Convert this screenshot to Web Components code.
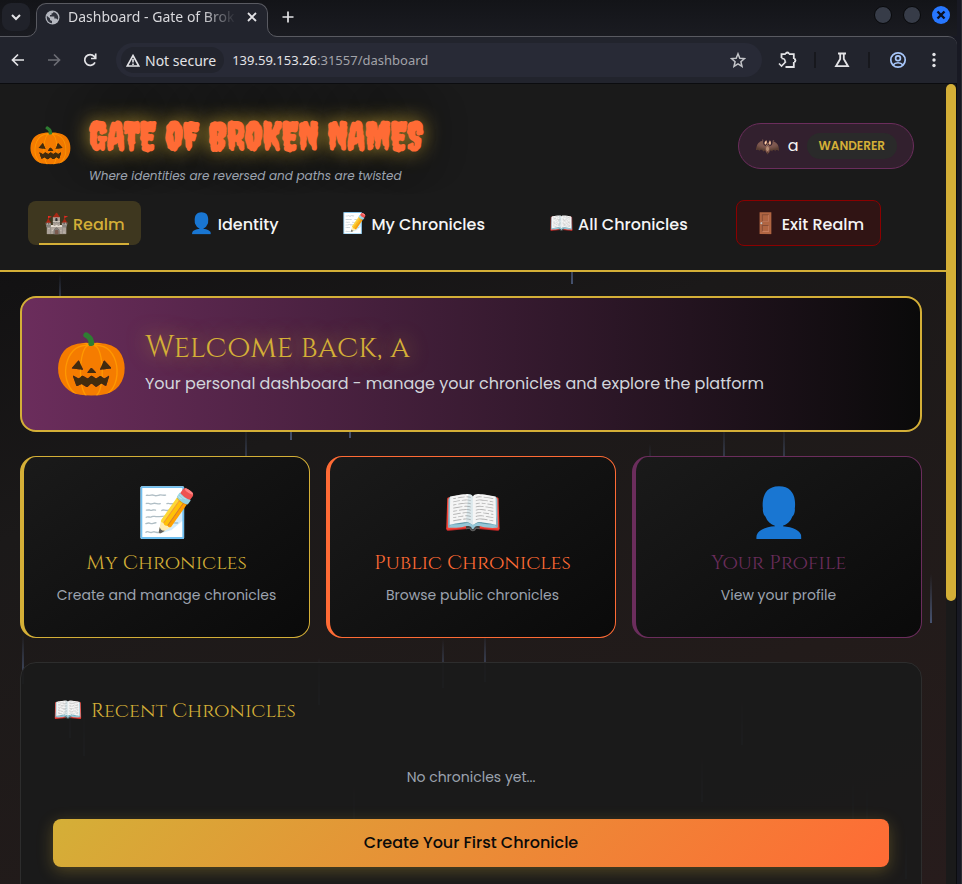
<!DOCTYPE html>
<html lang="en">
<head>
<meta charset="utf-8">
<title>Dashboard - Gate of Broken Names</title>
<style>
  :root {
    --gold: #d4af37;
    --orange: #ff6b35;
    --purple: #6b2d5c;
    --coal: #1a1a1a;
    --night: #0a0a0a;
    --muted: #9ca3af;
    --chrome: #22242d;
    --body-font: Poppins, Inter, "Noto Sans", sans-serif;
    --heading-font: Cinzel, "Liberation Serif", serif;
    --title-font: Creepster, "DejaVu Sans Condensed", sans-serif;
  }
  html, body {
    margin: 0;
    height: 100%;
    overflow: hidden;
    background: #181923;
    font-family: var(--body-font);
  }
</style>
</head>
<body>

<browser-window>
  <tab-strip slot="tabs" label="Dashboard - Gate of Brok"></tab-strip>
  <tool-bar slot="toolbar"></tool-bar>

  <rain-layer></rain-layer>
  <site-header>
    <user-pill slot="user" name="a" rank="Wanderer"></user-pill>
    <nav-link slot="nav" icon="🏰" active>Realm</nav-link>
    <nav-link slot="nav" icon="👤">Identity</nav-link>
    <nav-link slot="nav" icon="📝">My Chronicles</nav-link>
    <nav-link slot="nav" icon="📖">All Chronicles</nav-link>
    <nav-link slot="nav" icon="🚪" danger>Exit Realm</nav-link>
  </site-header>
  <dash-board>
    <welcome-banner icon="🎃">
      <span slot="title">Welcome back, a</span>
      Your personal dashboard - manage your chronicles and explore the platform
    </welcome-banner>
    <link-card slot="cards" icon="📝" heading="My Chronicles" style="--accent: var(--gold)">Create and manage chronicles</link-card>
    <link-card slot="cards" icon="📖" heading="Public Chronicles" style="--accent: var(--orange)">Browse public chronicles</link-card>
    <link-card slot="cards" icon="👤" heading="Your Profile" style="--accent: var(--purple)">View your profile</link-card>
    <recent-panel slot="recent" icon="📖" heading="Recent Chronicles" action="Create Your First Chronicle">No chronicles yet...</recent-panel>
  </dash-board>
</browser-window>

<script>
class BaseElement extends HTMLElement {
  constructor() {
    super();
    const template = document.createElement('template');
    template.innerHTML = this.render();
    this.attachShadow({mode: 'open'}).appendChild(template.content.cloneNode(true));
  }

  attr(name) {
    return this.getAttribute(name) || '';
  }
}

class BrowserWindow extends BaseElement {
  render() {
    return `
      <style>
        :host {
          box-sizing: border-box;
          display: flex;
          flex-direction: column;
          height: 100vh;
          padding-right: 4px;
          border-right: 1px solid #2c2d33;
        }
        .view {
          flex: 1;
          min-height: 0;
          display: flex;
          border-top: 1px solid #0b0c0f;
          border-right: 1px solid #0b0c0f;
        }
        .page {
          position: relative;
          flex: 1;
          min-width: 0;
          overflow: hidden;
          background: linear-gradient(160deg, #0d0d0d 0%, #131213 18%, #1b1919 40%, #221b1a 75%, #271c1c 100%);
        }
        .track {
          width: 10px;
          background: var(--coal);
        }
        .thumb {
          height: 517px;
          border-radius: 5px;
          background: var(--gold);
        }
      </style>
      <slot name="tabs"></slot>
      <slot name="toolbar"></slot>
      <div class="view">
        <div class="page"><slot></slot></div>
        <div class="track"><div class="thumb"></div></div>
      </div>
    `;
  }
}

class TabStrip extends BaseElement {
  render() {
    return `
      <style>
        :host {
          display: flex;
          height: 36px;
          padding-left: 2px;
          background: linear-gradient(#131418, #1a1b21);
          font-family: "Noto Sans", sans-serif;
        }
        button {
          display: grid;
          place-items: center;
          padding: 0;
          border: none;
          background: none;
          color: #e3e3e6;
        }
        .menu {
          width: 28px;
          height: 28px;
          margin: 3px 6px 0 0;
          border-radius: 9px;
          background: #20222a;
        }
        .tab {
          position: relative;
          box-sizing: border-box;
          display: flex;
          align-items: center;
          width: 232px;
          height: 34px;
          margin-top: 3px;
          padding: 0 7px 7px 8px;
          border: 1px solid #595a61;
          border-bottom: none;
          border-radius: 10px 10px 0 0;
          background: var(--chrome);
        }
        .label {
          flex: 1;
          margin: 0 8px;
          white-space: nowrap;
          font-size: 14px;
          line-height: 20px;
          color: #d8d8dc;
          -webkit-mask-image: linear-gradient(90deg, #000 80%, transparent);
          mask-image: linear-gradient(90deg, #000 80%, transparent);
        }
        .flare {
          position: absolute;
          bottom: 0;
          width: 10px;
          height: 10px;
        }
        .left { right: 100%; }
        .right { left: 100%; transform: scaleX(-1); }
        .new {
          width: 24px;
          height: 28px;
          margin: 3px 0 0 8px;
        }
        .buttons {
          display: flex;
          gap: 11px;
          margin: 6px 7px 0 auto;
        }
        .buttons button {
          box-sizing: border-box;
          width: 18px;
          height: 18px;
          border: 1px solid #08090b;
          border-radius: 50%;
          background: #373c48;
        }
        .buttons .close {
          border: none;
          background: #2777ff;
        }
      </style>
      <button class="menu" aria-label="Search tabs">
        <svg width="12" height="12" viewBox="0 0 12 12" fill="none" stroke="currentColor" stroke-width="2"><path d="M2 4l4 4 4-4"/></svg>
      </button>
      <div class="tab">
        <svg class="flare left" viewBox="0 0 10 10"><path d="M10 0v10H0V9.500A9.500 9.500 0 0 0 9.500 0z" fill="#22242d"/><path d="M0 9.500A9.500 9.500 0 0 0 9.500 0" fill="none" stroke="#595a61"/></svg>
        <svg class="flare right" viewBox="0 0 10 10"><path d="M10 0v10H0V9.500A9.500 9.500 0 0 0 9.500 0z" fill="#22242d"/><path d="M0 9.500A9.500 9.500 0 0 0 9.500 0" fill="none" stroke="#595a61"/></svg>
        <svg width="15" height="15" viewBox="0 0 15 15"><circle cx="7.500" cy="7.500" r="7" fill="#b4b7bf"/><path d="M1.800 5.800L5 8.600V10l2 1v2.200C4 13 1.800 10.500 1.800 7.500zM8.500 1.800c0 1.300-.5 1.700-2 1.700v1.400H5v1.500h4.300v2h2l1.500 1.400c1-2.600 0-6-3-7.400z" fill="#30333d"/></svg>
        <span class="label">${this.attr('label')}</span>
        <button aria-label="Close tab">
          <svg width="16" height="16" viewBox="0 0 16 16" stroke="currentColor" stroke-width="1.800"><path d="M4 4l8 8M12 4l-8 8"/></svg>
        </button>
      </div>
      <button class="new" aria-label="New tab">
        <svg width="12" height="12" viewBox="0 0 12 12" stroke="currentColor" stroke-width="1.700"><path d="M6 .5v11M.5 6h11"/></svg>
      </button>
      <div class="buttons">
        <button aria-label="Minimize"></button>
        <button aria-label="Maximize"></button>
        <button class="close" aria-label="Close">
          <svg width="10" height="10" viewBox="0 0 10 10" stroke="#0b1020" stroke-width="2.400"><path d="M1.500 1.500l7 7M8.500 1.500l-7 7"/></svg>
        </button>
      </div>
    `;
  }
}

class ToolBar extends BaseElement {
  render() {
    return `
      <style>
        :host {
          box-sizing: border-box;
          display: flex;
          align-items: center;
          height: 47px;
          padding-right: 5px;
          border-top: 1px solid #595a61;
          border-radius: 0 9px 0 0;
          background: var(--chrome);
          font-family: "Noto Sans", sans-serif;
          color: #e3e3e6;
        }
        button {
          display: grid;
          place-items: center;
          width: 36px;
          height: 36px;
          padding: 0;
          border: none;
          background: none;
          color: inherit;
        }
        button:disabled { color: #6c6d74; }
        svg {
          fill: none;
          stroke: currentColor;
          stroke-width: 2;
        }
        .address {
          flex: 1;
          display: flex;
          align-items: center;
          height: 34px;
          margin: 0 8px;
          padding: 0 6px 0 5px;
          border-radius: 17px;
          background: #282a36;
        }
        .chip {
          display: flex;
          align-items: center;
          gap: 5px;
          width: auto;
          height: 26px;
          padding: 0 8px 0 5px;
          border-radius: 13px;
          background: var(--chrome);
          font: 14px "Noto Sans", sans-serif;
        }
        .url {
          flex: 1;
          margin-left: 8px;
          font-size: 13px;
          line-height: 20px;
          color: #a2a3a9;
        }
        .url b {
          font-weight: 400;
          color: #e3e3e6;
        }
        .star { color: #c3c4c8; }
        i {
          width: 2px;
          height: 16px;
          margin: 0 8px;
          background: #17181d;
        }
        .profile {
          margin-left: 2px;
          color: #a8c7fa;
        }
      </style>
      <button aria-label="Back"><svg width="14" height="14" viewBox="0 0 14 14" style="stroke-width:1.700"><path d="M13 7H2M7 1.500L1.500 7 7 12.500"/></svg></button>
      <button aria-label="Forward" disabled><svg width="14" height="14" viewBox="0 0 14 14" style="stroke-width:1.700"><path d="M1 7h11M7 1.500L12.500 7 7 12.500"/></svg></button>
      <button aria-label="Reload"><svg width="14" height="14" viewBox="0 0 14 14" style="stroke-width:1.700"><path d="M12 9.300A5.400 5.400 0 1 1 11.200 3.400L12.500 5M12.700 .5v5H8"/></svg></button>
      <div class="address">
        <button class="chip">
          <svg width="14" height="13" viewBox="0 0 14 13" style="stroke-width:1.600"><path d="M7 1.500L12.800 12H1.200zM7 5v3.500M7 9.500V11"/></svg>
          Not secure
        </button>
        <span class="url"><b>139.59.153.26</b>:31557/dashboard</span>
        <button class="star" aria-label="Bookmark"><svg width="16" height="16" viewBox="0 0 16 16" style="stroke-width:1.500"><path d="M8 1.800l1.800 4.400 4.700.4-3.600 3.100 1.100 4.600L8 11.800l-4 2.500 1.100-4.600L1.500 6.600l4.700-.4z"/></svg></button>
      </div>
      <button aria-label="Extensions"><svg width="20" height="18" viewBox="0 0 20 18"><path d="M3.500 7V3.200h4.300M7.800 3a1.500 1.500 0 0 1 3 0M10.800 3.200h5V8M16 8a1.500 1.500 0 0 1 0 3M15.800 11v5H7.500" stroke-width="1.800"/><path d="M1 12.500l2.500 2.500L8 10.500M3.500 7.500C6 7.300 7.500 8.500 7 11" stroke-width="1.600"/></svg></button>
      <i></i>
      <button aria-label="Labs"><svg width="16" height="16" viewBox="0 0 16 16" style="stroke-width:1.800"><path d="M4 1.500h8M6.200 2v5L2 14.200h12L9.800 7V2"/></svg></button>
      <i></i>
      <button class="profile" aria-label="Profile"><svg width="18" height="18" viewBox="0 0 18 18" style="stroke-width:1.700"><circle cx="9" cy="9" r="7.200"/><circle cx="9" cy="7.200" r="2.400"/><path d="M4 14c2.500-3 7.500-3 10 0"/></svg></button>
      <button aria-label="Menu"><svg width="4" height="16" viewBox="0 0 4 16" style="fill:currentColor;stroke:none"><circle cx="2" cy="2.500" r="1.700"/><circle cx="2" cy="8" r="1.700"/><circle cx="2" cy="13.500" r="1.700"/></svg></button>
    `;
  }
}

// x, top, height of each falling drop
const DROPS = [
  [59, 190, 40], [571, 150, 50], [245, 340, 60], [290, 306, 50], [349, 304, 50],
  [649, 360, 50], [723, 340, 60], [783, 340, 60], [22, 550, 50], [442, 555, 49],
  [484, 548, 50], [318, 574, 47], [930, 490, 49], [69, 610, 44], [83, 625, 47],
  [741, 615, 46], [701, 672, 46], [852, 695, 50], [866, 700, 50], [353, 700, 50], [905, 745, 50],
];

class RainLayer extends BaseElement {
  render() {
    return `
      <style>
        :host {
          position: absolute;
          inset: 0;
        }
        svg {
          display: block;
          width: 100%;
          height: 100%;
        }
      </style>
      <svg aria-hidden="true">
        <linearGradient id="drop" x2="0" y2="1"><stop stop-color="#4a5a7a" stop-opacity="0"/><stop offset="1" stop-color="#4a5878" stop-opacity=".9"/></linearGradient>
        ${DROPS.map(([x, y, h]) => `<rect x="${x}" y="${y}" width="2" height="${h}" fill="url(#drop)"/>`).join('')}
      </svg>
    `;
  }
}

class SiteHeader extends BaseElement {
  render() {
    return `
      <style>
        :host {
          position: relative;
          display: block;
          padding: 24px 32px 24px 28px;
          border-bottom: 2px solid var(--gold);
          background: var(--coal);
        }
        .top {
          display: flex;
          align-items: center;
          justify-content: space-between;
          height: 76px;
          margin-bottom: 16px;
        }
        .brand {
          display: flex;
          align-items: center;
          gap: 16px;
        }
        .logo {
          font-size: 36px;
          line-height: 56px;
        }
        h1 {
          margin: 0;
          font: 700 39px/60px var(--title-font);
          color: var(--orange);
          text-shadow: 0 0 20px rgba(212, 175, 55, .8), 0 0 40px rgba(0, 0, 0, .5);
        }
        p {
          margin: 0;
          font-size: 12px;
          line-height: 20px;
          font-style: italic;
          color: var(--muted);
        }
        nav {
          display: flex;
          align-items: center;
          gap: 32px;
        }
      </style>
      <div class="top">
        <div class="brand">
          <span class="logo">🎃</span>
          <div>
            <h1>GATE OF BROKEN NAMES</h1>
            <p>Where identities are reversed and paths are twisted</p>
          </div>
        </div>
        <slot name="user"></slot>
      </div>
      <nav><slot name="nav"></slot></nav>
    `;
  }
}

class UserPill extends BaseElement {
  render() {
    return `
      <style>
        :host {
          display: flex;
          align-items: center;
          gap: 8px;
          padding: 9px 16px;
          border: 1px solid var(--purple);
          border-radius: 24px;
          background: rgba(107, 45, 92, .3);
          font-size: 16px;
          line-height: 26px;
          color: #f5f5f5;
        }
        .icon { font-size: 20px; }
        .rank {
          padding: 0 12px;
          border-radius: 13px;
          background: #2a2a2a;
          font-size: 12px;
          font-weight: 600;
          text-transform: uppercase;
          color: var(--gold);
        }
      </style>
      <span class="icon">🦇</span>
      <span>${this.attr('name')}</span>
      <span class="rank">${this.attr('rank')}</span>
    `;
  }
}

class NavLink extends BaseElement {
  render() {
    return `
      <style>
        :host { display: block; }
        a {
          position: relative;
          display: block;
          height: 44px;
          padding: 0 16px;
          border-radius: 8px;
          font-size: 16px;
          font-weight: 500;
          line-height: 44px;
          color: #f5f5f5;
          white-space: nowrap;
          text-decoration: none;
        }
        .icon {
          margin-right: 4px;
          font-size: 20px;
        }
        :host([active]) a {
          background: rgba(212, 175, 55, .2);
          color: var(--gold);
        }
        :host([active]) a::after {
          content: '';
          position: absolute;
          bottom: 0;
          left: 10%;
          width: 80%;
          height: 2px;
          background: var(--gold);
        }
        :host([danger]) a {
          border: 1px solid #8b0000;
          background: rgba(139, 0, 0, .2);
        }
      </style>
      <a href="#"><span class="icon">${this.attr('icon')}</span><slot></slot></a>
    `;
  }
}

class DashBoard extends BaseElement {
  render() {
    return `
      <style>
        :host {
          position: relative;
          display: flex;
          flex-direction: column;
          gap: 24px;
          padding: 24px 24px 24px 20px;
        }
        .cards {
          display: grid;
          grid-template-columns: repeat(3, 1fr);
          gap: 16px;
        }
      </style>
      <slot></slot>
      <div class="cards"><slot name="cards"></slot></div>
      <slot name="recent"></slot>
    `;
  }
}

class WelcomeBanner extends BaseElement {
  render() {
    return `
      <style>
        :host {
          display: flex;
          align-items: center;
          gap: 16px;
          padding: 32px;
          border: 2px solid var(--gold);
          border-radius: 16px;
          background: linear-gradient(90deg, var(--purple), var(--night));
        }
        .icon {
          font-size: 60px;
          line-height: 68px;
        }
        h2 {
          margin: 0 0 4px;
          font: 400 30px/36px var(--heading-font);
          color: var(--gold);
          text-shadow: 0 0 20px rgba(212, 175, 55, .7);
        }
        p {
          margin: 0;
          font-size: 16px;
          line-height: 28px;
          color: #d1d5db;
        }
      </style>
      <span class="icon">${this.attr('icon')}</span>
      <div>
        <h2><slot name="title"></slot></h2>
        <p><slot></slot></p>
      </div>
    `;
  }
}

class LinkCard extends BaseElement {
  render() {
    return `
      <style>
        :host { display: block; }
        a {
          display: flex;
          flex-direction: column;
          gap: 4px;
          padding: 24px 24px 28px;
          border: 1px solid var(--accent);
          border-left-width: 4px;
          border-radius: 16px;
          background: linear-gradient(145deg, var(--coal), var(--night));
          text-align: center;
          text-decoration: none;
        }
        .icon {
          font-size: 48px;
          line-height: 64px;
        }
        h3 {
          margin: 0;
          font: 400 20px/28px var(--heading-font);
          color: var(--accent);
        }
        p {
          margin: 0;
          font-size: 14px;
          line-height: 28px;
          color: var(--muted);
        }
      </style>
      <a href="#">
        <span class="icon">${this.attr('icon')}</span>
        <h3>${this.attr('heading')}</h3>
        <p><slot></slot></p>
      </a>
    `;
  }
}

class RecentPanel extends BaseElement {
  render() {
    return `
      <style>
        :host {
          display: block;
          padding: 32px;
          border: 1px solid #2d2d2d;
          border-radius: 16px;
          background: rgba(26, 26, 26, .95);
        }
        h2 {
          display: flex;
          align-items: center;
          gap: 8px;
          margin: 0;
          font: 400 20px/32px var(--heading-font);
          color: var(--gold);
        }
        .icon { font-size: 24px; }
        p {
          margin: 36px 0 28px;
          font-size: 14px;
          line-height: 28px;
          text-align: center;
          color: var(--muted);
        }
        button {
          display: block;
          width: 100%;
          height: 48px;
          border: none;
          border-radius: 8px;
          background: linear-gradient(135deg, var(--gold), var(--orange));
          box-shadow: 0 4px 16px rgba(212, 175, 55, .3);
          font: 500 16px/24px var(--body-font);
          color: var(--night);
        }
      </style>
      <h2><span class="icon">${this.attr('icon')}</span>${this.attr('heading')}</h2>
      <p><slot></slot></p>
      <button>${this.attr('action')}</button>
    `;
  }
}

customElements.define('browser-window', BrowserWindow);
customElements.define('tab-strip', TabStrip);
customElements.define('tool-bar', ToolBar);
customElements.define('rain-layer', RainLayer);
customElements.define('site-header', SiteHeader);
customElements.define('user-pill', UserPill);
customElements.define('nav-link', NavLink);
customElements.define('dash-board', DashBoard);
customElements.define('welcome-banner', WelcomeBanner);
customElements.define('link-card', LinkCard);
customElements.define('recent-panel', RecentPanel);
</script>
</body>
</html>
